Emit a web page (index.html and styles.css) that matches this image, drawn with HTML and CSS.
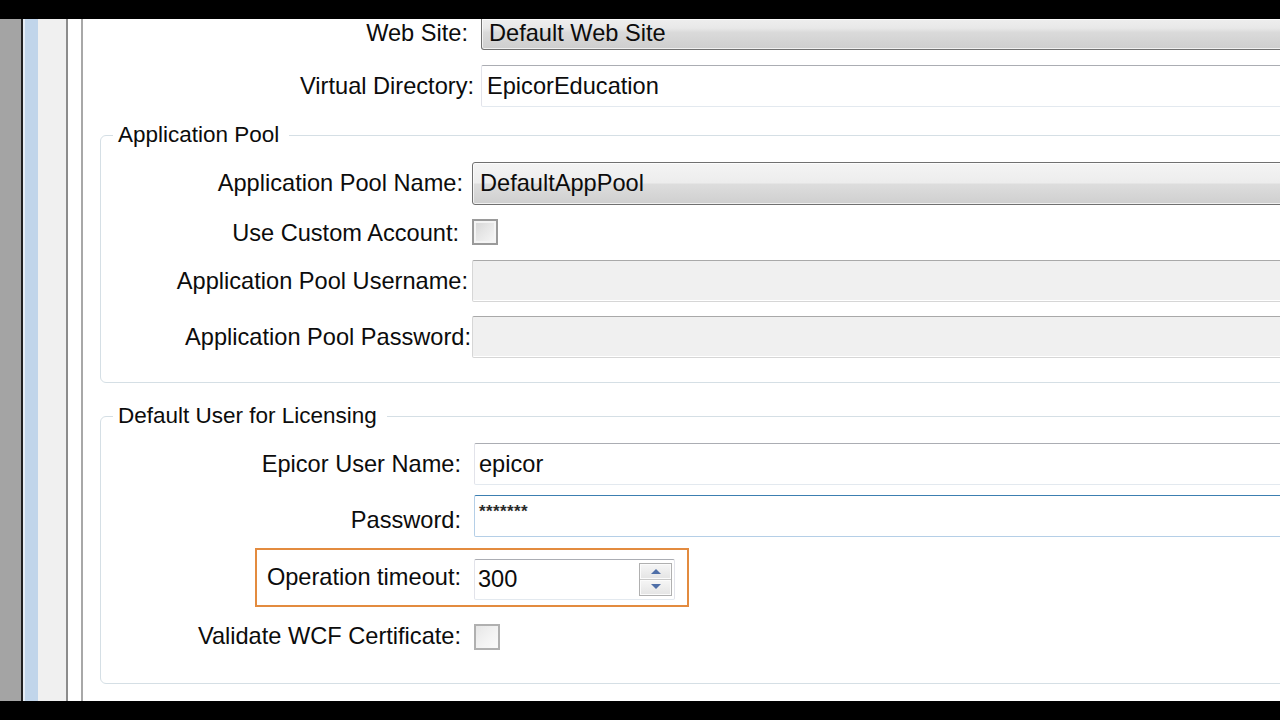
FILE: index.html
```html
<!DOCTYPE html>
<html>
<head>
<meta charset="utf-8">
<link rel="stylesheet" href="styles.css">
</head>
<body>
<div class="screen">
  <div class="bar-top"></div>
  <div class="main">
    <div class="strip s-gray"></div>
    <div class="strip s-dark"></div>
    <div class="strip s-pale"></div>
    <div class="strip s-blue"></div>
    <div class="strip s-light"></div>
    <div class="strip s-line"></div>
    <div class="strip s-white"></div>
    <div class="strip s-line2"></div>
    <div class="content">
      <div class="row r-web">
        <span class="lbl l0 l-web">Web Site:</span>
        <div class="combo combo-cut f0">Default Web Site</div>
      </div>
      <div class="row r-vdir">
        <span class="lbl l0">Virtual Directory:</span>
        <div class="text f0 t-vdir">EpicorEducation</div>
      </div>

      <fieldset class="group g1">
        <legend>Application Pool</legend>
        <div class="row r-pool">
          <span class="lbl l1">Application Pool Name:</span>
          <div class="combo f1">DefaultAppPool</div>
        </div>
        <div class="row r-cb1">
          <span class="lbl l1 l-custom">Use Custom Account:</span>
          <div class="check check-a"></div>
        </div>
        <div class="row r-user">
          <span class="lbl l1 l-user">Application Pool Username:</span>
          <div class="text disabled f1"></div>
        </div>
        <div class="row r-pass">
          <span class="lbl l1 l-pass">Application Pool Password:</span>
          <div class="text disabled f1"></div>
        </div>
      </fieldset>

      <fieldset class="group g2">
        <legend>Default User for Licensing</legend>
        <div class="row r-euser">
          <span class="lbl l2">Epicor User Name:</span>
          <div class="text f2">epicor</div>
        </div>
        <div class="row r-epass">
          <span class="lbl l2 l-epass">Password:</span>
          <div class="text focus f2"><span class="dots">*******</span></div>
        </div>
        <div class="row r-timeout">
          <div class="highlight">
            <span class="lbl l-timeout">Operation timeout:</span>
            <div class="spin">
              <span class="spin-val">300</span>
              <div class="spin-btns">
                <div class="sbtn"><svg width="16" height="8" viewBox="0 0 16 8"><path d="M3 7 L8 2 L13 7 Z" fill="#4f6fa8"/></svg></div>
                <div class="sbtn"><svg width="16" height="8" viewBox="0 0 16 8"><path d="M3 1 L8 6 L13 1 Z" fill="#4f6fa8"/></svg></div>
              </div>
            </div>
          </div>
        </div>
        <div class="row r-cb2">
          <span class="lbl l2">Validate WCF Certificate:</span>
          <div class="check check-b"></div>
        </div>
      </fieldset>
    </div>
  </div>
  <div class="bar-bottom"></div>
</div>
</body>
</html>
```

FILE: styles.css
```css
html, body {
  margin: 0;
  padding: 0;
  background: #000;
}

.screen {
  width: 1280px;
  height: 720px;
  display: flex;
  flex-direction: column;
  overflow: hidden;
  font-family: "Liberation Sans", Arial, sans-serif;
  font-size: 23.6px;
  color: #0c0c0c;
}

.bar-top { height: 19px; background: #000; flex: none; }
.bar-bottom { height: 19px; background: #000; flex: none; }

.main {
  height: 682px;
  flex: none;
  display: flex;
  overflow: hidden;
  background: #fff;
}

.strip { flex: none; height: 100%; }
.s-gray { width: 21px; background: #a4a4a4; }
.s-dark { width: 2px; background: #202020; }
.s-pale { width: 2px; background: #e6edf5; }
.s-blue { width: 13px; background: #c1d5ea; }
.s-light { width: 28px; background: #f0f0f0; }
.s-line { width: 2px; background: #8c8c8c; }
.s-white { width: 13px; background: #fff; }
.s-line2 { width: 2px; background: #a8a8a8; }

.content {
  flex: 1;
  min-width: 0;
  margin-right: -30px;
  display: flex;
  flex-direction: column;
}

.row {
  display: flex;
  align-items: center;
  flex: none;
}

.lbl {
  flex: none;
  text-align: right;
  white-space: nowrap;
}

/* section 0 */
.l0 { width: 391px; margin-right: 7px; }
.l-web { width: 385px; margin-right: 13px; }

.r-web {
  height: 31px;
  align-items: flex-start;
  line-height: 28px;
}
.r-vdir { height: 42px; margin-top: 15px; }

/* fields */
.combo, .text {
  flex: 1;
  height: 100%;
  box-sizing: border-box;
  display: flex;
  align-items: center;
  white-space: nowrap;
}

.combo {
  border: 1px solid #707070;
  border-radius: 3px;
  background: linear-gradient(#f4f4f4 0%, #ededed 48%, #dddddd 52%, #cfcfcf 100%);
  box-shadow: inset 0 0 0 1px rgba(255,255,255,0.7);
  padding-left: 7px;
}

.combo.combo-cut {
  border-top: none;
  border-radius: 0 0 3px 3px;
  align-items: flex-start;
  background: linear-gradient(#eeeeee 0%, #e8e8e8 30%, #dadada 45%, #cecece 100%);
}

.text {
  border: 1px solid #e2e3ea;
  border-top-color: #abadb3;
  border-bottom-color: #e3e9ef;
  border-radius: 2px;
  background: #fff;
  padding-left: 5px;
}

.text.disabled {
  background: #f0f0f0;
  border-color: #d6d6d6;
  border-top-color: #a9a9a9;
  box-shadow: inset 0 -1px 0 #fff;
}

.text.focus {
  border-color: #b5cfe7;
  border-top-color: #3c7fb1;
  align-items: flex-start;
}

.dots {
  font-size: 17px;
  font-weight: bold;
  letter-spacing: 0.4px;
  line-height: 1;
  margin-top: 7px;
  color: #2a2a2a;
}

/* groups */
.group {
  flex: none;
  margin: 0 0 0 17px;
  padding: 0;
  border: 1px solid #d5dfe5;
  border-radius: 6px;
  min-width: 0;
}

.group legend {
  margin-left: 12px;
  padding: 0 10px 0 5px;
  line-height: 26px;
  font-size: 22.5px;
}

.g1 { margin-top: 15px; padding-top: 14px; padding-bottom: 24px; }
.g2 { margin-top: 20px; padding-top: 14px; padding-bottom: 28px; }

.l1 { width: 362px; margin-right: 9px; }
.l-custom { width: 358px; margin-right: 13px; margin-top: 3px; }
.l-user { width: 367px; margin-right: 4px; }
.l-pass { width: 370px; margin-right: 1px; }

.r-pool { height: 43px; }
.r-cb1 { height: 36px; margin-top: 9px; }
.r-user { height: 42px; margin-top: 10px; }
.r-pass { height: 42px; margin-top: 14px; }

.l2 { width: 360px; margin-right: 13px; }
.l-epass { margin-top: 9px; }
.f2.text { padding-left: 4px; }

.r-euser { height: 42px; }
.r-epass { height: 42px; margin-top: 10px; }
.r-timeout { height: 59px; margin-top: 11px; }
.r-cb2 { height: 37px; margin-top: 11px; }

/* checkboxes */
.check {
  flex: none;
  width: 26px;
  height: 26px;
  box-sizing: border-box;
}
.check-a {
  border: 2px solid #9a9a9a;
  background: linear-gradient(135deg, #d4d4d4 0%, #e6e6e6 45%, #f7f7f7 100%);
  box-shadow: inset 0 0 0 2px #f4f4f4;
}
.check-b {
  border: 2px solid #b0b0b0;
  background: linear-gradient(135deg, #e6e6e6 0%, #f4f4f4 60%, #fafafa 100%);
}

/* highlighted operation timeout */
.highlight {
  margin-left: 154px;
  height: 59px;
  box-sizing: border-box;
  width: 434px;
  border: 2px solid #e38b3f;
  display: flex;
  align-items: center;
  padding-right: 12px;
}
.l-timeout { width: 204px; margin-right: 13px; }

.spin {
  flex: none;
  width: 201px;
  height: 41px;
  margin-top: 3px;
  box-sizing: border-box;
  border: 1px solid #e2e3ea;
  border-top-color: #abadb3;
  border-bottom-color: #e3e9ef;
  border-radius: 2px;
  display: flex;
  align-items: center;
  justify-content: space-between;
  padding-left: 3px;
  padding-right: 2px;
}

.spin-btns {
  width: 33px;
  height: 33px;
  display: flex;
  flex-direction: column;
  gap: 1px;
  border: 1px solid #b0b0b0;
  box-sizing: border-box;
  background: #c8c8c8;
}
.sbtn {
  flex: 1;
  display: flex;
  align-items: center;
  justify-content: center;
  background: linear-gradient(#f6f6f6, #e4e4e4);
  box-shadow: inset 0 0 0 1px #fbfbfb;
}
.sbtn svg { display: block; }
```
